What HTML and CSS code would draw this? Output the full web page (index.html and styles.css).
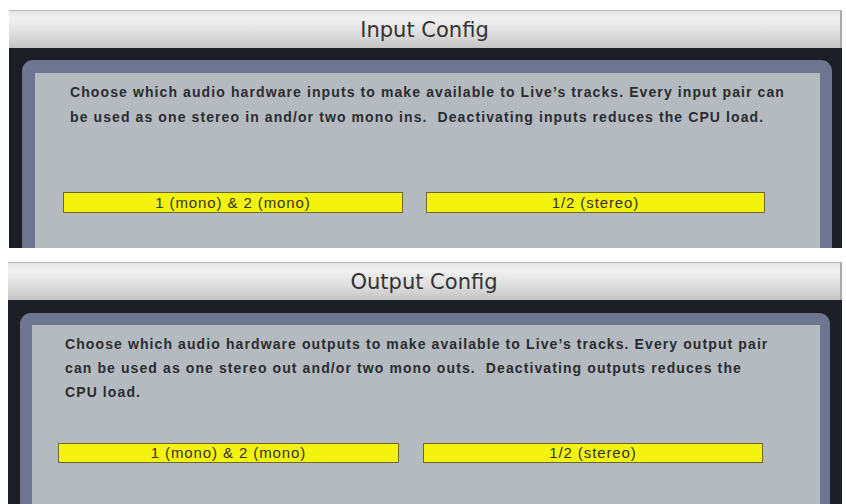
FILE: index.html
```html
<!DOCTYPE html>
<html lang="en">
<head>
	<meta charset="UTF-8">
	<title>Input / Output Config</title>
	<link rel="stylesheet" href="styles.css">
</head>
<body>
	<div class="panel panel_in">
		<div class="titlebar">Input Config</div>
		<div class="frame">
			<div class="bezel">
				<div class="content">
					<p class="desc">Choose which audio hardware inputs to make available to Live’s tracks. Every input pair can<br>be used as one stereo in and/or two mono ins.&nbsp; Deactivating inputs reduces the CPU load.</p>
					<div class="routes">
						<div class="route">1 (mono) &amp; 2 (mono)</div>
						<div class="route">1/2 (stereo)</div>
					</div>
				</div>
			</div>
		</div>
	</div>

	<div class="panel panel_out">
		<div class="titlebar">Output Config</div>
		<div class="frame">
			<div class="bezel">
				<div class="content">
					<p class="desc">Choose which audio hardware outputs to make available to Live’s tracks. Every output pair<br>can be used as one stereo out and/or two mono outs.&nbsp; Deactivating outputs reduces the<br>CPU load.</p>
					<div class="routes">
						<div class="route">1 (mono) &amp; 2 (mono)</div>
						<div class="route">1/2 (stereo)</div>
					</div>
				</div>
			</div>
		</div>
	</div>
</body>
</html>
```

FILE: styles.css
```css
*{
	margin: 0;
	padding: 0;
	box-sizing: border-box;
}
html,body{
	background: #fff;
	overflow: hidden;
}
body{
	height: 504px;
	padding-top: 10px;
	font-family: "Liberation Sans", Arial, sans-serif;
}
.panel{
	width: 833px;
	margin-left: 9px;
}
.panel_out{
	width: 834px;
	margin-left: 8px;
	margin-top: 14px;
}
.titlebar{
	height: 38px;
	line-height: 38px;
	text-align: center;
	font-family: "DejaVu Sans", sans-serif;
	font-size: 21px;
	color: #333;
	background: linear-gradient(#e4e4e4, #f1f1f1 20%, #dedede 60%, #c4c4c4);
	border-top: 1px solid #b8b8b8;
	border-right: 2px solid #a8a8a8;
}
.frame{
	background: #1b1e24;
	padding: 12px 10px 0 13px;
}
.panel_out .frame{
	padding: 13px 12px 0 12px;
}
.bezel{
	background: #6d7590;
	border-radius: 11px 11px 0 0;
	padding: 13px 12px 0 13px;
}
.panel_out .bezel{
	padding: 12px 10px 0 12px;
}
.content{
	background: #b4babf;
	height: 175px;
}
.panel_out .content{
	height: 190px;
}
.desc{
	height: 119px;
	padding: 7px 0 0 35px;
	font-size: 14px;
	font-weight: bold;
	line-height: 25px;
	color: #2a2c30;
	letter-spacing: 1.1px;
	white-space: nowrap;
}
.panel_out .desc{
	height: 118px;
	padding-left: 33px;
	line-height: 24px;
}
.routes{
	display: grid;
	grid-template-columns: 340px 339px;
	column-gap: 23px;
	padding-left: 28px;
}
.panel_out .routes{
	grid-template-columns: 341px 340px;
	column-gap: 24px;
	padding-left: 26px;
}
.route{
	height: 21px;
	line-height: 19px;
	text-align: center;
	background: #f3f30e;
	border: 1px solid #6a6a2e;
	font-size: 15px;
	letter-spacing: 0.9px;
	color: #34341a;
}
.panel_out .route{
	height: 20px;
	line-height: 18px;
}
```
